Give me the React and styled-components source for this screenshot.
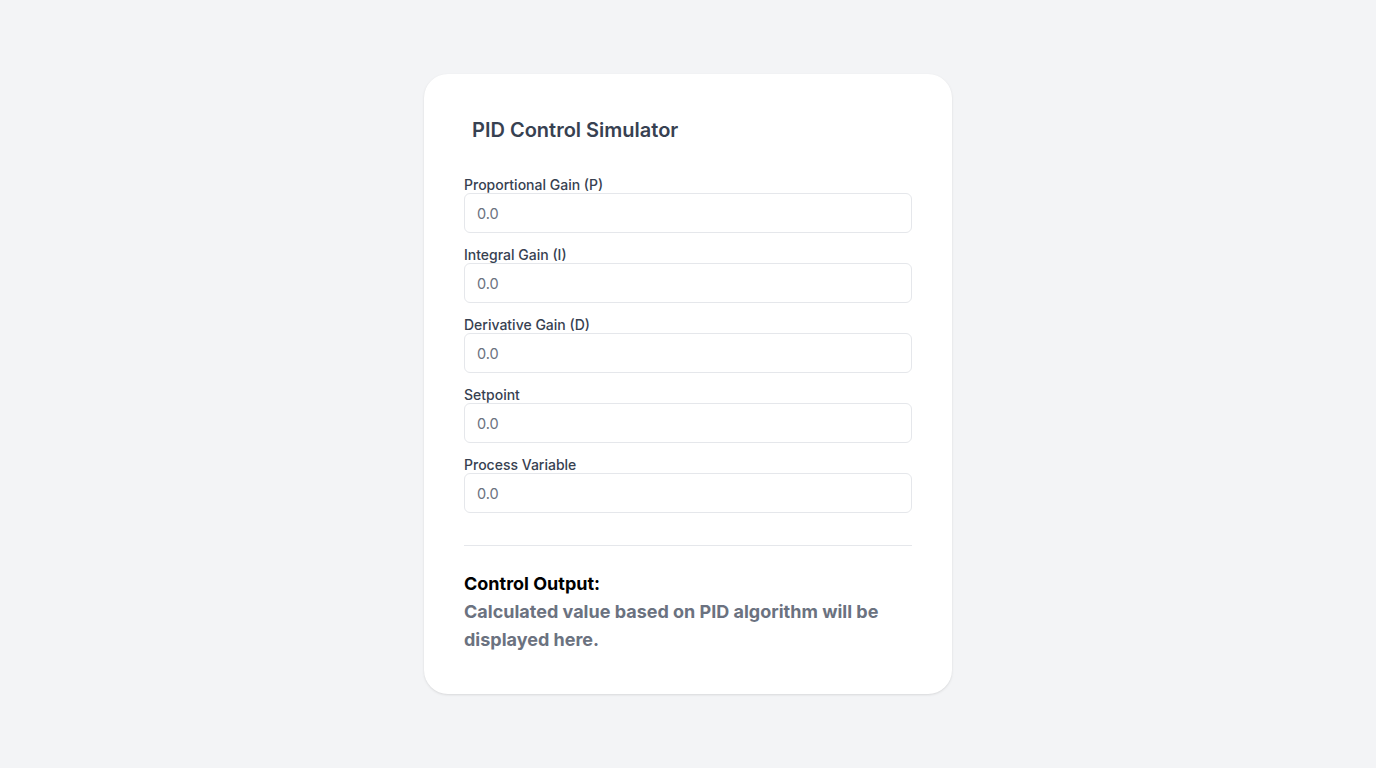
import React from "react";
import styled, { createGlobalStyle } from "styled-components";

const Global = createGlobalStyle`
  html, body { margin: 0; padding: 0; }
  body {
    background: #f3f4f6;
    font-family: Inter, "Noto Sans", sans-serif;
    -webkit-font-smoothing: antialiased;
  }
  * { box-sizing: border-box; }
`;

const Page = styled.div`
  min-height: 768px;
  display: flex;
  align-items: center;
  justify-content: center;
`;

const Card = styled.div`
  width: 528px;
  background: #ffffff;
  border-radius: 24px;
  padding: 40px;
  box-shadow: 0 1px 3px rgba(0, 0, 0, 0.08), 0 1px 2px rgba(0, 0, 0, 0.04);
  display: flex;
  flex-direction: column;
`;

const Title = styled.h1`
  margin: 0 0 29px;
  padding: 4px 8px;
  font-size: 20px;
  line-height: 24px;
  font-weight: 600;
  color: #374151;
`;

const Form = styled.div`
  display: flex;
  flex-direction: column;
  gap: 12px;
`;

const Field = styled.label`
  display: flex;
  flex-direction: column;
`;

const Label = styled.span`
  padding-top: 2px;
  font-size: 14px;
  line-height: 16px;
  font-weight: 500;
  color: #374151;
`;

const Input = styled.input`
  height: 40px;
  width: 100%;
  border: 1px solid #e5e7eb;
  border-radius: 6px;
  padding: 0 12px;
  font-family: inherit;
  font-size: 14.5px;
  color: #111827;
  background: #fff;
  outline: none;
  &::placeholder { color: #6b7280; }
`;

const Divider = styled.hr`
  border: none;
  border-top: 1px solid #e5e7eb;
  margin: 32px 0 24px;
`;

const OutputTitle = styled.h2`
  margin: 0;
  font-size: 18px;
  line-height: 28px;
  font-weight: 700;
  color: #000;
`;

const OutputText = styled.p`
  margin: 0;
  font-size: 18px;
  line-height: 28px;
  font-weight: 700;
  color: #6b7280;
`;

const fields = [
  "Proportional Gain (P)",
  "Integral Gain (I)",
  "Derivative Gain (D)",
  "Setpoint",
  "Process Variable",
];

export default function App() {
  return (
    <Page>
      <Global />
      <Card>
        <Title>PID Control Simulator</Title>
        <Form>
          {fields.map((f) => (
            <Field key={f}>
              <Label>{f}</Label>
              <Input type="text" placeholder="0.0" />
            </Field>
          ))}
        </Form>
        <Divider />
        <OutputTitle>Control Output:</OutputTitle>
        <OutputText>Calculated value based on PID algorithm will be displayed here.</OutputText>
      </Card>
    </Page>
  );
}
